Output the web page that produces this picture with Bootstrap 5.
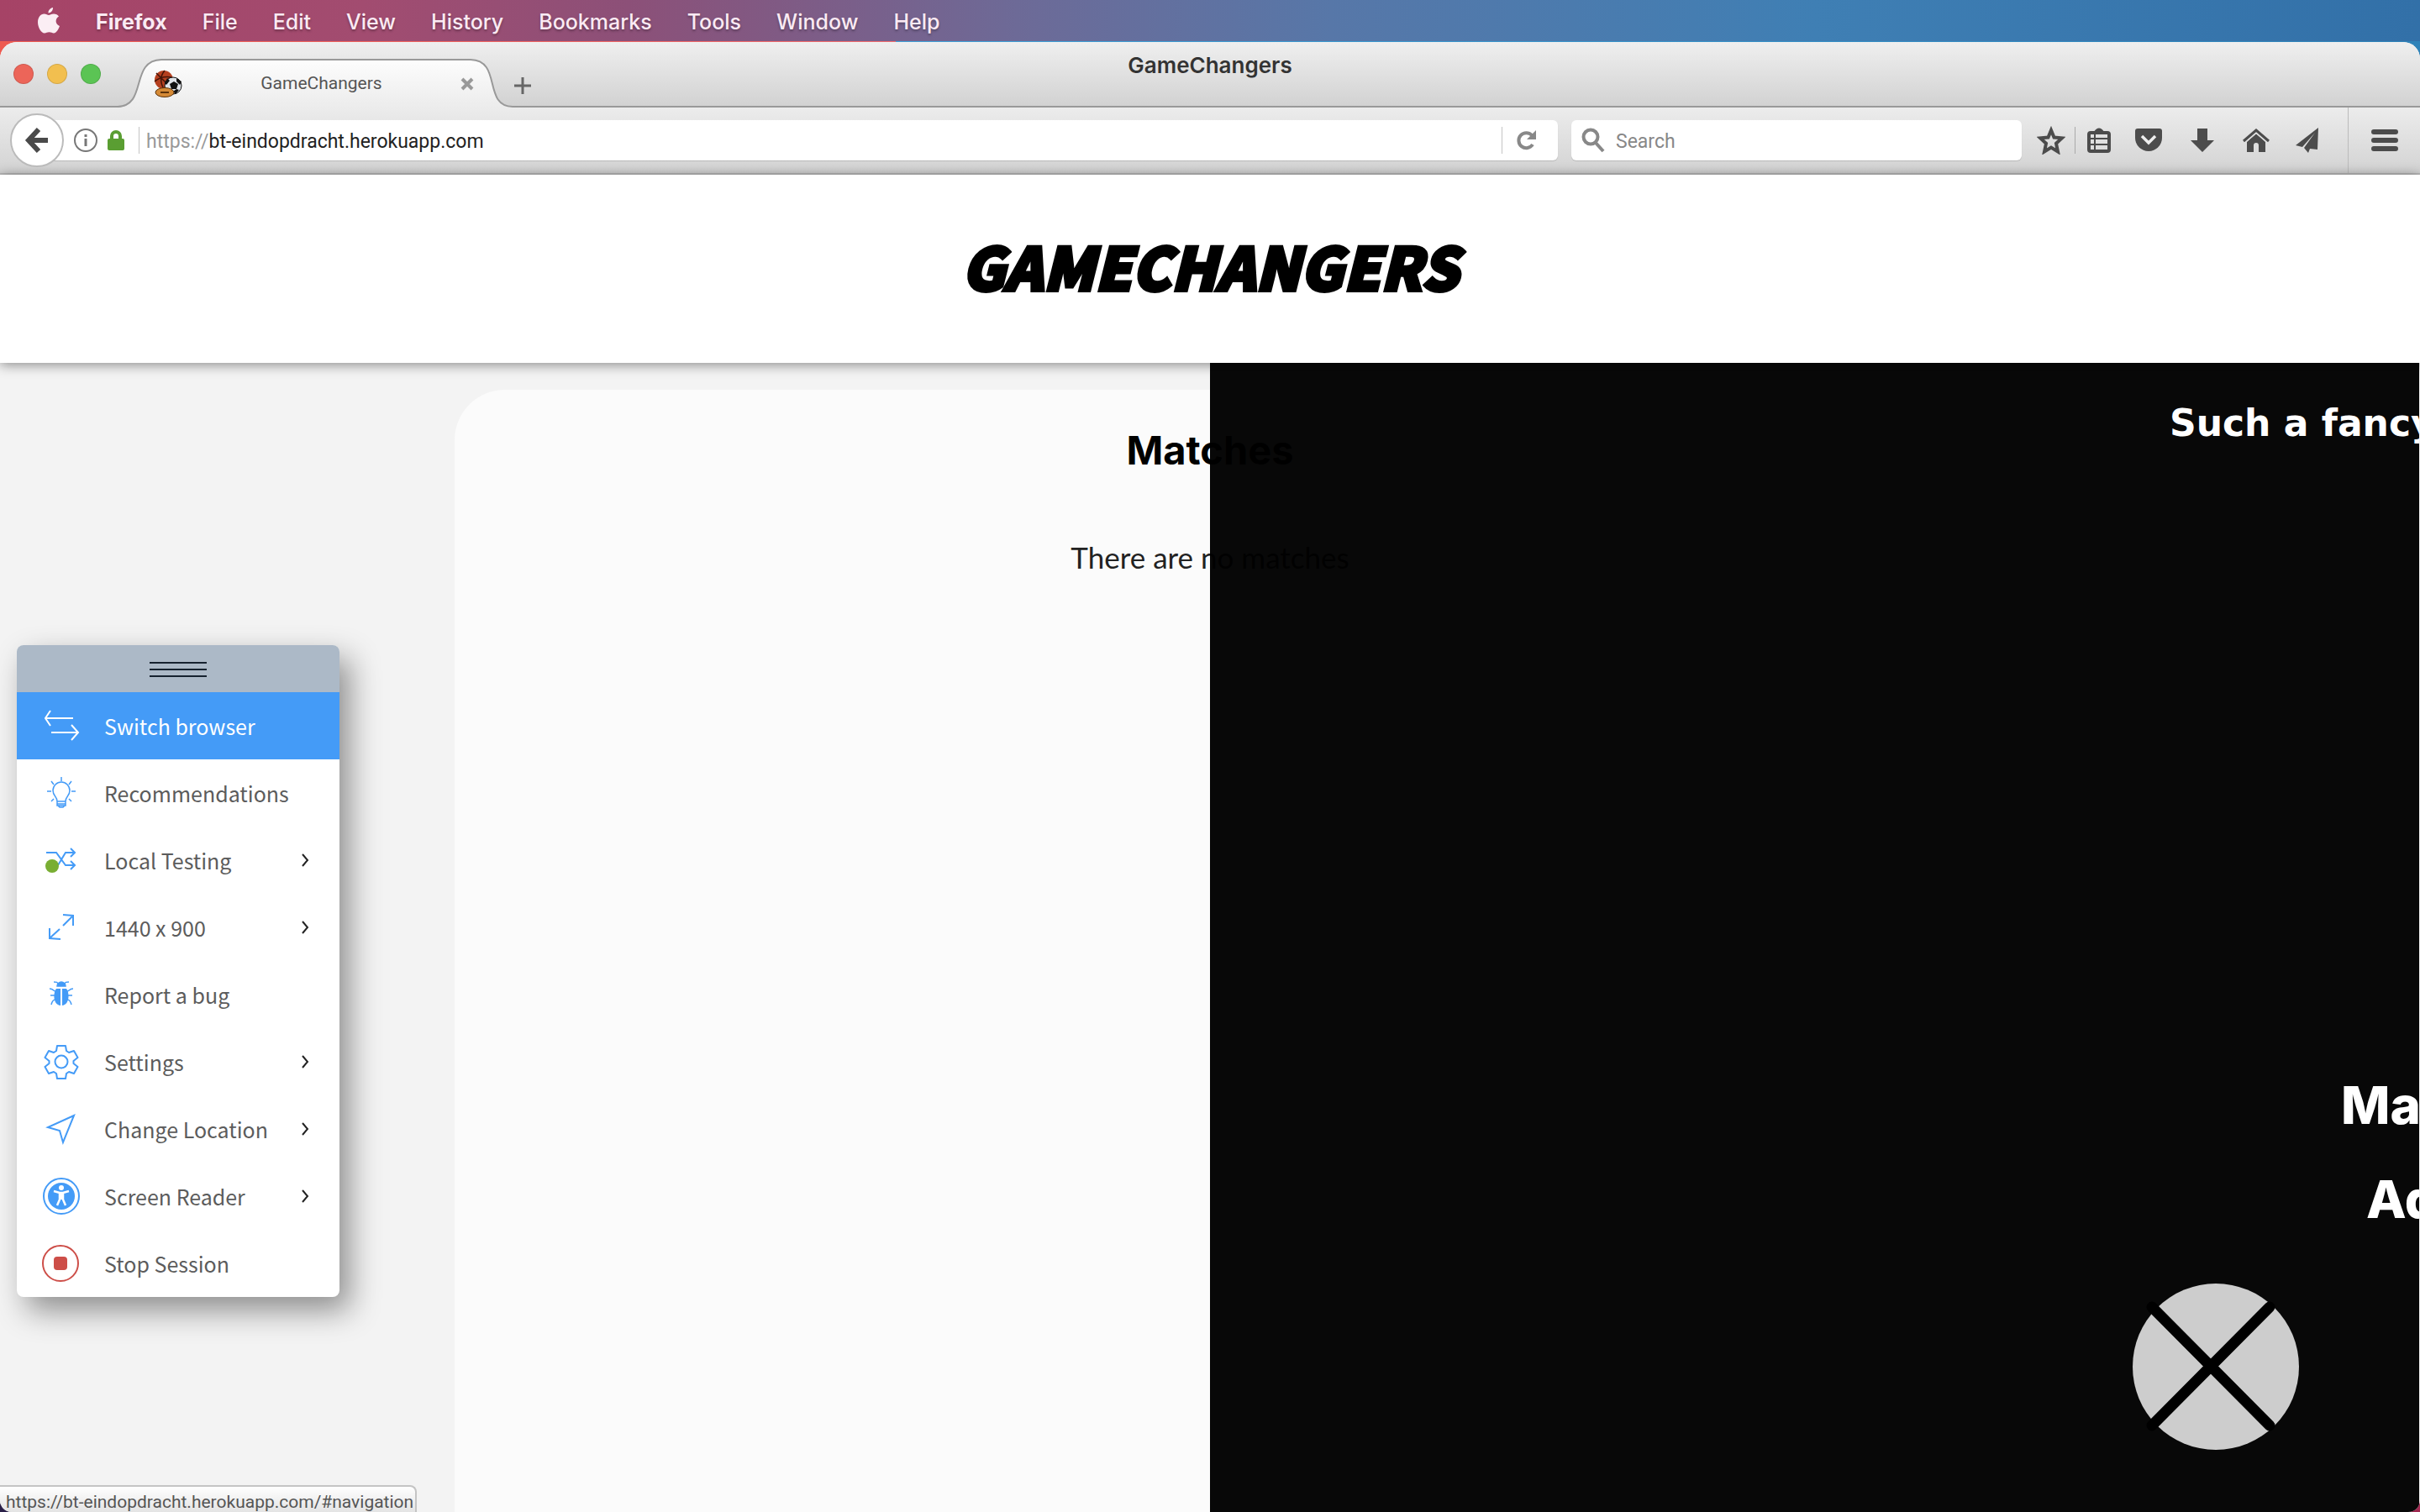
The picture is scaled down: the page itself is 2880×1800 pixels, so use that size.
<!DOCTYPE html>
<html lang="en">
<head>
<meta charset="utf-8">
<title>GameChangers</title>
<link rel="stylesheet" href="https://cdn.jsdelivr.net/npm/bootstrap@5.3.0/dist/css/bootstrap.min.css">
<style>
html,body{height:100%}
body{font-family:Inter,"Liberation Sans",sans-serif;color:#333;background:#a83a5c;overflow:hidden}
svg{display:block;flex:none}
button{border:0;background:none;padding:0;color:inherit}
.desk{background:linear-gradient(90deg,#2a2048 0,#2a2048 50%,#a02850 50%) bottom/100% 40px no-repeat,linear-gradient(90deg,#ee5a50 0,#f06a6e 37%,#3fa0d8 37%,#2f82b8 100%)}
.mac-menu{height:49px;padding-left:44px;gap:42px;font-size:25px;font-weight:500;background:linear-gradient(90deg,#a64366 0,#a24c70 15%,#8c5078 26%,#6d6a97 42%,#5777a8 55%,#3f7fb4 75%,#3270a8 100%)}
.mac-menu a{color:#fbeaf3;text-decoration:none;line-height:48px;padding-top:2px;text-shadow:0 2px 3px rgba(0,0,0,.3)}
.mac-menu .app{font-weight:700}
.win{border-radius:20px 20px 14px 14px;overflow:hidden;margin-top:1px;background:#f3f3f3;position:relative}
.tabstrip{height:78px;background:linear-gradient(#efefef,#d2d2d2);border-bottom:2px solid #999;position:relative}
.lights{padding-left:16px;gap:16px;width:140px}
.lights button{width:24px;height:24px;border-radius:50%;border:1px solid rgba(0,0,0,.12)}
.lights .l1{background:#ec6559}
.lights .l2{background:#f2bf4f}
.lights .l3{background:#5bc454}
.tabbox{width:470px;height:58px;margin-top:20px;position:relative;margin-bottom:-2px}
.tabbox>svg{position:absolute;left:0;top:0}
.tabbox .inner{position:relative;padding:2px 46px 0 43px;height:58px}
.tabbox a{color:#555;font-family:Roboto,sans-serif;font-size:21px;text-decoration:none}
.newtab{padding-top:26px}
.wintitle{position:absolute;left:0;right:0;top:10px;text-align:center;font-size:26px;line-height:36px;font-weight:600;color:#333;pointer-events:none}
.toolbar{height:80px;background:linear-gradient(#ececec,#d3d3d3);border-bottom:2px solid #bbb;padding-left:12px}
.back{width:64px;height:64px;border-radius:50%;background:#fff;border:2px solid #bbb;position:relative;z-index:2}
.field{height:48px;background:#fff;border-radius:0 6px 6px 0;font-family:Roboto,sans-serif;font-size:23px;box-shadow:0 1px 1px rgba(0,0,0,.15)}
.field input{border:0;outline:0;padding:4px 0 0;background:none;color:#222;min-width:0;flex:1}
.field label{color:#999;padding:4px 0 0 8px}
.urlf{margin-left:-16px;padding-left:28px}
.lock{margin:0 13px 0 8px}
.searchf{width:536px;border-radius:6px;margin-left:16px;padding-left:12px}
.searchf input{margin-left:13px}
.searchf input::placeholder{color:#888;opacity:1}
.vr2{width:1px;height:32px;background:#c4c4c4}
.tools{color:#4c4c4c;padding-left:18px}
.tools .sep{margin:0 11px;background:#aaa}
.tools .t2{margin-left:25px}
.tools .t3{margin-left:32px}
.tools .t4{margin-left:28px}
.tools .burger{margin-left:32px;width:86px;height:78px;border-left:1px solid #bbb}
.site{height:224px;padding-bottom:8px;background:#fff;box-shadow:0 2px 14px rgba(0,0,0,.45);position:relative;z-index:1}
.brand{font-family:"Noto Sans CJK SC","Liberation Sans",sans-serif;font-weight:900;font-style:italic;font-size:70px;line-height:100px;color:#000;-webkit-text-stroke:4px #000}
.stage{padding:32px 541px 0}
.panel{background:#fbfbfb;border-radius:60px 60px 0 0;padding-top:44px;text-align:center}
.panel h1{font-size:47px;line-height:56px;font-weight:700;color:#000;margin:0}
.panel p{font-family:Lato,sans-serif;font-size:35px;line-height:44px;color:#222;margin:77px 0 0}
.drawer{position:absolute;left:50%;right:1px;top:0;bottom:0;background:rgba(0,0,0,.97);z-index:2;color:#fff;overflow:hidden;white-space:nowrap;font-weight:800}
.drawer h2{font-family:"DejaVu Sans",sans-serif;font-size:44px;line-height:56px;font-weight:700;margin:44px -200px 0 1142px}
.drawer a{color:#fff;text-decoration:none;display:block;font-size:62px;line-height:72px;margin-right:-200px}
.drawer .n1{margin-top:748px;margin-left:1346px}
.drawer .n2{margin-top:40px;margin-left:1376px}
.shut{position:absolute;right:142px;bottom:73px}
.status{position:absolute;left:0;bottom:0;height:32px;min-width:496px;padding:0 2px 0 7px;border:2px solid #c4c4c4;border-width:2px 2px 0 0;border-radius:0 8px 0 0;background:linear-gradient(#fff,#e4e4e4);font-family:Roboto,sans-serif;font-size:21px;line-height:36px;color:#555;white-space:nowrap;z-index:3}
.dock{position:absolute;left:20px;top:768px;width:384px;border-radius:8px;background:#fff;overflow:hidden;z-index:5;font-family:"Noto Sans CJK SC",sans-serif;font-size:25px;box-shadow:12px 16px 36px rgba(0,0,0,.42)}
.grip{height:56px;background:#acb9c7;gap:6px;padding-top:2px}
.grip i{width:68px;height:2px;background:#16222f}
.dock button.rowb{height:80px;width:100%;color:#5c5c5c;padding-right:36px;text-align:left;line-height:40px}
.dock .ico{width:104px;padding-left:29px}
.dock .rowb.on{background:#449bf7;color:#fff}
</style>
</head>
<body class="d-flex flex-column">
<nav class="mac-menu d-flex align-items-center" aria-label="Menu bar">
<svg width="28" height="32" viewBox="0 0 28 32" fill="#fbeef4"><path d="M19 0c.3 3-2.300 6.500-5.500 6.500C13.200 3.500 16 .4 19 0zM14 9c1.500 0 3-1.500 6-1.500 2.500 0 4.800 1.200 6 3-5 3-4.200 9.500 1 11.500C25.500 26 23 30.500 20 30.500c-2 0-3-1.200-5.500-1.200S11 30.500 9 30.500C5 30.500 1 23.500 1 17.500c0-6 3.500-10 7.500-10C11 7.500 12.500 9 14 9z"/></svg>
<a class="app" href="#">Firefox</a><a href="#">File</a><a href="#">Edit</a><a href="#">View</a><a href="#">History</a><a href="#">Bookmarks</a><a href="#">Tools</a><a href="#">Window</a><a href="#">Help</a>
</nav>
<div class="desk flex-grow-1 d-flex flex-column">
<main class="win flex-grow-1 d-flex flex-column">
<div class="tabstrip d-flex">
<div class="lights d-flex align-items-center"><button class="l1" aria-label="Close"></button><button class="l2" aria-label="Minimise"></button><button class="l3" aria-label="Zoom"></button></div>
<div class="tabbox">
<svg width="470" height="58" viewBox="0 0 470 58"><defs><linearGradient id="tg" x2="0" y2="1"><stop stop-color="#fdfdfd"/><stop offset="1" stop-color="#ececec"/></linearGradient></defs><path d="M0 58C36 56 14 2 52 1H420C458 2 434 56 470 57V58z" fill="url(#tg)"/><path d="M0 57C36 56 14 2 52 1H420C458 2 434 56 470 57" fill="none" stroke="#999" stroke-width="2"/></svg>
<div class="inner d-flex align-items-center justify-content-between">
<svg width="34" height="34" viewBox="0 0 34 34"><circle cx="12" cy="12" r="11" fill="#b5401f"/><path d="M3 4l16 16M13 1C7 8 8 16 12 23M1 14C8 8 15 8 21 9" stroke="#421408" stroke-width="1.500" fill="none"/><circle cx="23" cy="19" r="10" fill="#dfe3e8" stroke="#111"/><path d="M19 17l5-3 5 3-2 6h-6zM13 16l3-6 3 3-4 5zM27 10l6 4-2 4-4-4zM30 24l-4 5-3-3 4-3z" fill="#111"/><ellipse cx="13" cy="27" rx="11" ry="5.500" fill="#d58a36" stroke="#5a320c"/><path d="M8 27h10" stroke="#5a320c" stroke-width="2"/></svg>
<a href="#">GameChangers</a>
<button aria-label="Close tab"><svg width="16" height="16" viewBox="0 0 16 16" stroke="#999" stroke-width="4"><path d="M2 2l12 12M14 2L2 14"/></svg></button>
</div></div>
<button class="newtab d-flex align-items-center align-self-start mt-3" aria-label="New tab"><svg width="24" height="20" viewBox="0 0 24 20" stroke="#666" stroke-width="3"><path d="M12 0v20M2 10h20"/></svg></button>
<div class="wintitle">GameChangers</div>
</div>
<div class="toolbar d-flex align-items-center">
<button class="back d-flex align-items-center justify-content-center" aria-label="Back"><svg width="30" height="32" viewBox="0 0 30 32" fill="none" stroke="#4a4a4a" stroke-width="6"><path d="M17 3L5 16l12 13M5 16h23"/></svg></button>
<div class="field urlf flex-grow-1 d-flex align-items-center">
<svg width="28" height="28" viewBox="0 0 28 28" fill="none" stroke="#777" stroke-width="2"><circle cx="14" cy="14" r="13"/><path d="M14 12v9M14 7v3" stroke-width="3"/></svg>
<svg class="lock" width="28" height="26" viewBox="0 0 28 26"><path d="M9 13V8a5 5 0 0110 0v5" fill="none" stroke="#5a9e32" stroke-width="4"/><rect x="4" y="11" width="20" height="14" rx="2" fill="#5a9e32"/></svg>
<span class="vr2"></span>
<label for="url">https://</label><input id="url" value="bt-eindopdracht.herokuapp.com">
<span class="vr2"></span>
<button class="ms-3 me-4" aria-label="Reload"><svg width="26" height="26" viewBox="0 0 26 26" fill="none" stroke="#888" stroke-width="4"><path d="M20 18a9 9 0 11-1-11"/><path d="M24 1v11H13z" fill="#888" stroke="none"/></svg></button>
</div>
<div class="field searchf d-flex align-items-center">
<svg width="28" height="30" viewBox="0 0 28 30" fill="none" stroke="#888" stroke-width="4"><circle cx="11" cy="11" r="8.500"/><path d="M17 18l9 10"/></svg>
<input id="q" type="search" placeholder="Search" aria-label="Search">
</div>
<div class="tools d-flex align-items-center">
<button aria-label="Bookmark"><svg width="34" height="34" viewBox="0 0 34 34" fill="none" stroke="currentColor" stroke-width="4"><path d="M17 5l3.500 8.500 9.500.8-7 6.500 2 9.700-8-5-8 5 2-9.700-7-6.500 9.500-.8z"/></svg></button>
<span class="vr2 sep"></span>
<button aria-label="Reading list"><svg width="34" height="32" viewBox="0 0 34 32" fill="none" stroke="currentColor" stroke-width="4"><path d="M12 6q5-7 10 0z" fill="currentColor" stroke-width="2"/><rect x="5" y="7" width="24" height="22" rx="2"/><path d="M5 14h24M5 21h24M12 8v21" stroke-width="2"/></svg></button>
<button class="t2" aria-label="Pocket"><svg width="34" height="32" viewBox="0 0 34 32"><path d="M4 2h26q3 0 3 3v8a16 16 0 01-32 0V5q0-3 3-3z" fill="currentColor"/><path d="M9 11l8 8 8-8" fill="none" stroke="#eee" stroke-width="3.500"/></svg></button>
<button class="t3" aria-label="Downloads"><svg width="30" height="30" viewBox="0 0 30 30" fill="currentColor"><path d="M9 1h12v14h8L15 29 1 15h8z"/></svg></button>
<button class="t3" aria-label="Home"><svg width="34" height="30" viewBox="0 0 34 30"><path d="M17 7L28 17v12h-8v-8q0-3-3-3t-3 3v8H6V17z" fill="currentColor"/><path d="M2 16L17 3l15 13" fill="none" stroke="currentColor" stroke-width="3"/><path d="M5 17L17 7l12 10" fill="none" stroke="#ddd" stroke-width="1"/></svg></button>
<button class="t4" aria-label="Send"><svg width="32" height="32" viewBox="0 0 32 32" fill="currentColor"><path d="M29 1L2 22l8 2L25 7 12 25l5 6 2-5 9 1z"/></svg></button>
<button class="burger d-flex align-items-center justify-content-center" aria-label="Menu"><svg width="32" height="28" viewBox="0 0 32 28" stroke="currentColor" stroke-width="6" stroke-linecap="round"><path d="M3 4h26M3 14h26M3 24h26"/></svg></button>
</div>
</div>
<header class="site d-flex align-items-center justify-content-center"><div class="brand">GAMECHANGERS</div></header>
<section class="stage flex-grow-1 position-relative d-flex">
<div class="panel flex-grow-1"><h1>Matches</h1><p>There are no matches</p></div>
<aside class="drawer">
<h2>Such a fancy</h2>
<a class="n1" href="#">Ma</a>
<a class="n2" href="#">Ad</a>
<button class="shut" aria-label="Close menu"><svg width="200" height="200" viewBox="0 0 200 200"><circle cx="100" cy="100" r="99" fill="#cdcdcd"/><path d="M24 29L164 170M164 29L24 170" stroke="#000" stroke-width="13" stroke-linecap="round"/></svg></button>
</aside>
<div class="status">https://bt-eindopdracht.herokuapp.com/#navigation</div>
</section>
</main>
</div>
<div class="dock">
<div class="grip d-flex flex-column align-items-center justify-content-center"><i></i><i></i><i></i></div>
<button class="rowb on d-flex align-items-center"><span class="ico"><svg width="48" height="48" viewBox="0 0 48 48" fill="none" stroke="#fff" stroke-width="2"><path d="M38 15H5M11 6L5 15l6 9M12 32h32M36 23l8 9-8 9"/></svg></span>Switch browser</button>
<button class="rowb d-flex align-items-center"><span class="ico"><svg width="48" height="48" viewBox="0 0 48 48" fill="none" stroke="#449bf7" stroke-width="1.500"><path d="M19 34c0-6-5-6-5-13a10 10 0 0120 0c0 7-5 7-5 13zM19 34v5h10v-5M19 37h10M20 39l2 2h4l2-2M24 5v5M7 22h5M36 22h5M12 10l3 4M36 10l-3 4M12 34l3-3M36 34l-3-3"/></svg></span>Recommendations</button>
<button class="rowb d-flex align-items-center"><span class="ico"><svg width="48" height="48" viewBox="0 0 48 48" fill="none" stroke="#449bf7" stroke-width="2"><path d="M6 15h12l11 15h10M20 30l9-15h10M35 10l5 5-5 5M35 25l5 5-5 5"/><circle cx="13" cy="31" r="8" fill="#79ae33" stroke="none"/></svg></span><span class="flex-grow-1">Local Testing</span><svg width="10" height="16" viewBox="0 0 10 16" fill="none" stroke="#222" stroke-width="2"><path d="M2 1l6 7-6 7"/></svg></button>
<button class="rowb d-flex align-items-center"><span class="ico"><svg width="48" height="48" viewBox="0 0 48 48" fill="none" stroke="#449bf7" stroke-width="2"><path d="M26 22L38 10M26 9l12 1 0 12M22 26L10 37M10 25v12l13 1"/></svg></span><span class="flex-grow-1">1440 x 900</span><svg width="10" height="16" viewBox="0 0 10 16" fill="none" stroke="#222" stroke-width="2"><path d="M2 1l6 7-6 7"/></svg></button>
<button class="rowb d-flex align-items-center"><span class="ico"><svg width="48" height="48" viewBox="0 0 48 48" fill="none" stroke="#449bf7" stroke-width="1.500"><path d="M19 14a5 5 0 0110 0z" fill="#449bf7"/><path d="M23 17v20C14 36 14 22 18 17zM25 17v20C34 36 34 22 30 17z" fill="#449bf7" stroke="none"/><path d="M20 12c0-3-2-3-5-3M28 12c0-3 2-3 5-3M17 20c-3 0-2-3-7-3M31 20c3 0 2-3 7-3M16 25h-5M32 25h5M17 30c-3 0-4 2-5 6M31 30c3 0 4 2 5 6"/></svg></span>Report a bug</button>
<button class="rowb d-flex align-items-center"><span class="ico"><svg width="48" height="48" viewBox="0 0 48 48" fill="none" stroke="#449bf7" stroke-width="2" stroke-linejoin="round"><path d="M19 5h10l1 6 3 2 6-2 4.500 8-5 4v3l5 4-4.500 8-6-2-3 2-1 6H19l-1-6-3-2-6 2-4.500-8 5-4v-3l-5-4L9 11l6 2 3-2z"/><circle cx="24" cy="24" r="7.500"/></svg></span><span class="flex-grow-1">Settings</span><svg width="10" height="16" viewBox="0 0 10 16" fill="none" stroke="#222" stroke-width="2"><path d="M2 1l6 7-6 7"/></svg></button>
<button class="rowb d-flex align-items-center"><span class="ico"><svg width="48" height="48" viewBox="0 0 48 48" fill="none" stroke="#449bf7" stroke-width="2"><path d="M39 8L8 22l14 4 4 14z"/></svg></span><span class="flex-grow-1">Change Location</span><svg width="10" height="16" viewBox="0 0 10 16" fill="none" stroke="#222" stroke-width="2"><path d="M2 1l6 7-6 7"/></svg></button>
<button class="rowb d-flex align-items-center"><span class="ico"><svg width="48" height="48" viewBox="0 0 48 48" fill="none"><circle cx="24" cy="24" r="21" stroke="#449bf7" stroke-width="2"/><circle cx="24" cy="24" r="16" fill="#449bf7"/><circle cx="24" cy="14" r="3" fill="#fff"/><path d="M15 18l7 2h4l7-2M24 20v8M22 21v7l-3 7M26 21v7l3 7" stroke="#fff" stroke-width="2.500"/></svg></span><span class="flex-grow-1">Screen Reader</span><svg width="10" height="16" viewBox="0 0 10 16" fill="none" stroke="#222" stroke-width="2"><path d="M2 1l6 7-6 7"/></svg></button>
<button class="rowb d-flex align-items-center"><span class="ico"><svg width="48" height="48" viewBox="0 0 48 48"><circle cx="23" cy="24" r="21" fill="none" stroke="#cd4e48" stroke-width="2"/><rect x="15" y="16" width="16" height="16" rx="4" fill="#cd4e48"/></svg></span>Stop Session</button>
</div>
<script src="https://cdn.jsdelivr.net/npm/bootstrap@5.3.0/dist/js/bootstrap.bundle.min.js"></script>
</body>
</html>
